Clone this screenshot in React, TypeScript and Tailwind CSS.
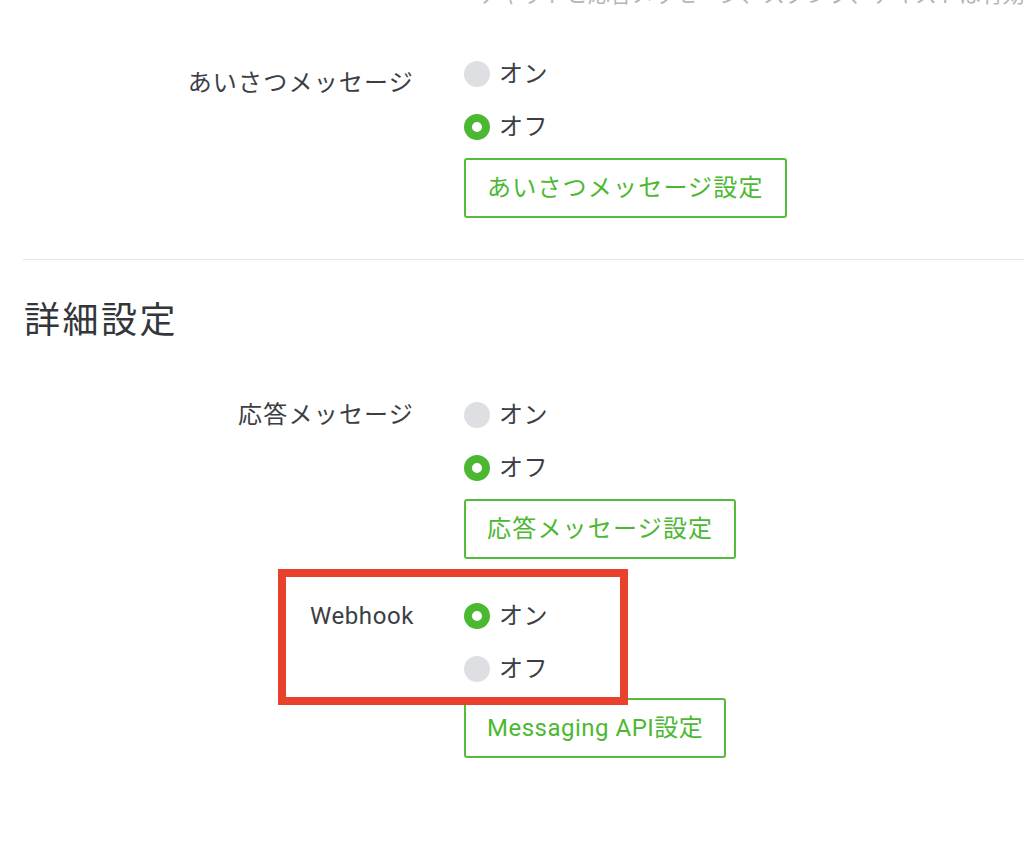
import React from "react";

const FONT = { fontFamily: 'Roboto, "Noto Sans CJK JP", "Noto Sans", sans-serif' };

function Radio({ checked, label }: { checked: boolean; label: string }) {
  return (
    <div className="flex h-[53px] items-center gap-[9px]">
      {checked ? (
        <span className="box-border h-[26px] w-[26px] rounded-full border-[8px] border-[#4cb832] bg-white" />
      ) : (
        <span className="h-[26px] w-[26px] rounded-full bg-[#dddfe3]" />
      )}
      <span className="text-[24px] leading-none tracking-[0.6px] text-[#3b3e44]">{label}</span>
    </div>
  );
}

function Row({
  label,
  on,
  button,
  labelPad = "",
  btnGap = "mt-[5px]",
  labelTrack = "tracking-[1.2px]",
  btnTrack = "tracking-[1.2px]",
  children,
}: {
  label: string;
  on: boolean;
  button: string;
  labelPad?: string;
  btnGap?: string;
  labelTrack?: string;
  btnTrack?: string;
  children?: React.ReactNode;
}) {
  return (
    <div className="relative flex">
      <div className={`ml-[24px] flex h-[53px] w-[390px] items-center justify-end ${labelPad}`}>
        <span className={`text-[24px] leading-none text-[#3b3e44] ${labelTrack}`}>{label}</span>
      </div>
      <div className="ml-[50px] flex flex-col items-start">
        <Radio checked={on} label="オン" />
        <Radio checked={!on} label="オフ" />
        <button
          className={`${btnGap} flex h-[60px] items-center rounded-[3px] border-2 border-[#55bb3b] bg-white px-[21px] text-[24px] leading-none text-[#4cb832] ${btnTrack}`}
        >
          {button}
        </button>
      </div>
      {children}
    </div>
  );
}

export default function App() {
  return (
    <div className="h-[854px] w-[1024px] overflow-hidden bg-white" style={FONT}>
      <div className="h-[8px] overflow-hidden">
        <div className="-mt-[17px] whitespace-nowrap pl-[478px] text-[22px] leading-[24px] text-[#b3b6bb]">
          チャットと応答メッセージ、スタンプ、テキストは有効
        </div>
      </div>
      <div className="mt-[39px]">
        <Row label="あいさつメッセージ" on={false} button="あいさつメッセージ設定" labelPad="pt-[18px]" />
      </div>
      <div className="ml-[23px] mt-[41px] h-px bg-[#e4e5e7]" />
      <h2 className="ml-[24px] mt-[35px] text-[36px] font-normal leading-[52px] tracking-[2.5px] text-[#33363b]">
        詳細設定
      </h2>
      <div className="mt-[41px]">
        <Row label="応答メッセージ" on={false} button="応答メッセージ設定" />
      </div>
      <div className="mt-[30px]">
        <Row
          label="Webhook"
          on={true}
          button="Messaging API設定"
          btnGap="mt-[3px]"
          labelTrack="tracking-[0.6px]"
          btnTrack="tracking-[0.5px]"
        >
          <div className="pointer-events-none absolute left-[278px] top-[-20px] h-[136px] w-[350px] border-[8px] border-[#e8412c]" />
        </Row>
      </div>
    </div>
  );
}
